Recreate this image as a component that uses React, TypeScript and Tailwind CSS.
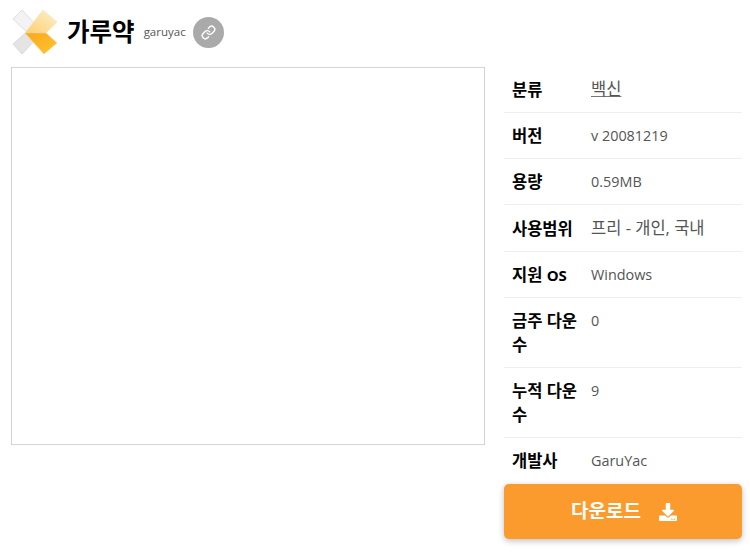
import { FaDownload } from "react-icons/fa"
import { Link } from "lucide-react"

const rows = [
  { label: "분류", value: <span className="text-[16.5px] leading-none underline decoration-[#777]">백신</span> },
  { label: "버전", value: "v 20081219" },
  { label: "용량", value: "0.59MB" },
  { label: "사용범위", value: <span className="text-[16.5px] leading-none">프리 - 개인, 국내</span> },
  { label: <>지원 <span className="text-[15px] leading-none">OS</span></>, value: "Windows" },
  { label: "금주 다운수", value: "0" },
  { label: "누적 다운수", value: "9" },
  { label: "개발사", value: "GaruYac" },
]

const Logo = () => (
  <svg width="48" height="48" viewBox="0 0 48 48" className="shrink-0">
    <defs>
      <linearGradient id="top" x1="1" y1="0" x2="0" y2="1">
        <stop offset="0" stopColor="#fdf0cf" />
        <stop offset="1" stopColor="#fdcf6e" />
      </linearGradient>
      <linearGradient id="bottom" x1="0" y1="0" x2="1" y2="1">
        <stop offset="0" stopColor="#fba61c" />
        <stop offset="1" stopColor="#fdc52e" />
      </linearGradient>
    </defs>
    <path d="M2 11 L11 2 L26 18 L18 26 Z" fill="#f3f3f3" stroke="#dedede" />
    <path d="M2 36 L11 46 L26 30 L18 22 Z" fill="#e4e4e4" stroke="#dadada" />
    <path d="M32 2 L46 14 L35 25 L14 25 Z" fill="url(#top)" stroke="#f3e3bd" strokeWidth="0.6" />
    <path d="M14 25 L35 25 L46 35 L33 46 Z" fill="url(#bottom)" stroke="#f7d08a" strokeWidth="0.6" />
  </svg>
)

const App = () => {
  return (
    <div className="h-[554px] w-[750px] overflow-hidden bg-white pl-[11px] pr-2 pt-2 font-['Open_Sans','Noto_Sans_CJK_KR',sans-serif]">
      {/* Header */}
      <div className="flex h-[48px] items-center">
        <Logo />
        <h1 className="ml-2 text-[24.5px] font-bold leading-none text-black">가루약</h1>
        <span className="ml-[9px] text-[11.5px] text-[#555]">garuyac</span>
        <span className="ml-[7px] flex h-[31px] w-[31px] items-center justify-center rounded-full bg-[#aaaaaa] text-white">
          <Link size={15} strokeWidth={2.25} />
        </span>
      </div>

      <div className="mt-[11px] flex gap-[19px]">
        {/* Screenshot area */}
        <div className="h-[378px] w-[474px] shrink-0 border border-[#d4d4d4]" />

        {/* Info */}
        <div className="-mt-[0.5px] w-[238px]">
          {rows.map((row, i) => (
            <div
              key={i}
              className={`flex px-2 pb-[10.25px] pt-[11.25px] text-[14.4px] leading-[23.75px] ${
                i < rows.length - 1 ? "border-b border-[#ebeef3]" : ""
              }`}
            >
              <div className="w-[79px] shrink-0 pr-2 text-[16.5px] font-bold text-black">{row.label}</div>
              <div className="text-[#555]">{row.value}</div>
            </div>
          ))}
          <button className="mt-[1px] flex h-[55px] w-full items-center justify-center gap-[18px] rounded-[5px] bg-[#fb9b2d] pl-[2px] text-[19px] font-bold text-white shadow-[0_2px_6px_rgba(0,0,0,0.25)]">
            다운로드
            <FaDownload size={18} />
          </button>
        </div>
      </div>
    </div>
  )
}

export default App
